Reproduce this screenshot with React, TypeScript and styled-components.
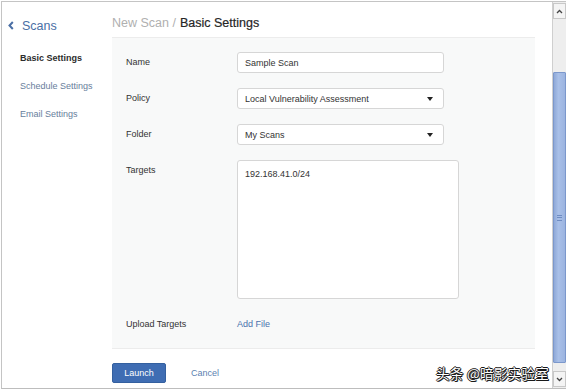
import styled, { createGlobalStyle } from "styled-components";

const GlobalStyle = createGlobalStyle`
  html, body {
    margin: 0;
    padding: 0;
    background: #ffffff;
    font-family: "Liberation Sans", Arial, sans-serif;
  }
`;

const Frame = styled.div`
  margin: 1px 0 0 1px;
  width: 565px;
  height: 388px;
  box-sizing: border-box;
  border-top: 1px solid #c4c4c4;
  border-left: 1px solid #c4c4c4;
  border-bottom: 1px solid #bdbdbd;
  display: flex;
  position: relative;
  overflow: hidden;
`;

const Content = styled.div`
  flex: 1;
  display: flex;
  background: #ffffff;
`;

const Sidebar = styled.nav`
  width: 110px;
  flex-shrink: 0;
  display: flex;
  flex-direction: column;
  padding-top: 6px;
`;

const BackLink = styled.div`
  height: 35px;
  display: flex;
  align-items: center;
  gap: 8px;
  padding-left: 6px;
  color: #4a6fa5;
  font-size: 12.5px;
`;

const NavList = styled.div`
  display: flex;
  flex-direction: column;
  padding-top: 1px;
`;

const NavItem = styled.div<{ $active?: boolean }>`
  height: 28px;
  line-height: 28px;
  padding-left: 18px;
  font-size: 9px;
  font-weight: ${(p) => (p.$active ? 700 : 400)};
  color: ${(p) => (p.$active ? "#2d2d2d" : "#677e9c")};
`;

const Main = styled.main`
  flex: 1;
  display: flex;
  flex-direction: column;
  padding: 6px 17px 0 0;
`;

const Title = styled.h1`
  margin: 0;
  height: 29px;
  display: flex;
  align-items: center;
  font-size: 12.5px;
  font-weight: 400;
  color: #262626;
  -webkit-text-stroke: 0.2px #262626;
`;

const Crumb = styled.span`
  color: #b0b0b0;
  margin-right: 4px;
  -webkit-text-stroke: 0;
`;

const Panel = styled.section`
  background: #f8f9f9;
  border-top: 1px solid #ececec;
  border-bottom: 1px solid #ececec;
  padding: 14px 0 13px 14px;
  display: flex;
  flex-direction: column;
  gap: 15px;
`;

const Row = styled.div`
  display: grid;
  grid-template-columns: 111px 1fr;
  align-items: start;
`;

const Label = styled.label`
  font-size: 9px;
  line-height: 21px;
  color: #333;
`;

const Field = styled.div<{ $width: number; $height?: number }>`
  width: ${(p) => p.$width}px;
  height: ${(p) => p.$height ?? 21}px;
  box-sizing: border-box;
  background: #fff;
  border: 1px solid #d6d6d6;
  border-radius: 3px;
  display: flex;
  align-items: center;
  justify-content: space-between;
  padding: 0 10px 0 7px;
  font-size: 9px;
  color: #333;
`;

const Area = styled(Field)`
  align-items: flex-start;
  padding-top: 8px;
`;

const Caret = styled.span`
  width: 0;
  height: 0;
  border-left: 3.5px solid transparent;
  border-right: 3.5px solid transparent;
  border-top: 4px solid #222;
`;

const Link = styled.span`
  font-size: 9px;
  line-height: 21px;
  color: #4a72ad;
`;

const Footer = styled.div`
  display: flex;
  align-items: center;
  gap: 25px;
  padding-top: 14px;
`;

const Button = styled.button`
  width: 54px;
  height: 20px;
  border: 1px solid #34609f;
  border-radius: 2px;
  background: #3f6db3;
  color: #fff;
  font-family: inherit;
  font-size: 9px;
  padding: 0;
`;

const CancelLink = styled.span`
  font-size: 9px;
  color: #5c7fb1;
`;

const Scrollbar = styled.div`
  width: 13px;
  flex-shrink: 0;
  background: #eeeeee;
  border-left: 1px solid #cfcfcf;
  display: flex;
  flex-direction: column;
  padding: 1px 0 1px;
`;

const ScrollButton = styled.div`
  height: 14px;
  background: #f4f4f4;
  border: 1px solid #c8c8c8;
  display: flex;
  align-items: center;
  justify-content: center;
`;

const Track = styled.div<{ $grow?: boolean; $size?: number }>`
  flex: ${(p) => (p.$grow ? 1 : `0 0 ${p.$size}px`)};
`;

const Thumb = styled.div`
  flex: 0 0 289px;
  background: linear-gradient(90deg, #8fa9d8, #a9c0e8 40%, #9cb4e0);
  border: 1px solid #7c98cc;
  border-radius: 1px;
  display: flex;
  align-items: center;
  justify-content: center;
`;

const Grip = styled.div`
  width: 5px;
  height: 6px;
  border-top: 1px solid #6f8cc2;
  border-bottom: 1px solid #6f8cc2;
  box-sizing: border-box;
  position: relative;
  &::after {
    content: "";
    position: absolute;
    left: 0;
    right: 0;
    top: 1.5px;
    border-top: 1px solid #6f8cc2;
  }
`;

const Watermark = styled.div`
  position: absolute;
  right: 17px;
  bottom: 5px;
  font-family: "Noto Sans CJK SC", sans-serif;
  font-size: 13.5px;
  color: #ffffff;
  text-shadow: 1px 1px 0 #1a1a1a, -1px 0 0 #1a1a1a, 0 -1px 0 #1a1a1a,
    1px 0 0 #1a1a1a, 0 1px 0 #1a1a1a;
  letter-spacing: 0.3px;
`;

const Chevron = ({ dir }: { dir: "left" | "up" | "down" }) => {
  if (dir === "left") {
    return (
      <svg width="6" height="9" viewBox="0 0 6 9">
        <path d="M4.8 1 L1.5 4.5 L4.8 8" fill="none" stroke="#4a6fa5" strokeWidth="2" />
      </svg>
    );
  }
  return (
    <svg width="7" height="5" viewBox="0 0 7 5">
      <path
        d={dir === "up" ? "M1 4 L3.5 1.5 L6 4" : "M1 1 L3.5 3.5 L6 1"}
        fill="none"
        stroke="#444"
        strokeWidth="1.3"
      />
    </svg>
  );
};

export default function App() {
  return (
    <>
      <GlobalStyle />
      <Frame>
        <Content>
          <Sidebar>
            <BackLink>
              <Chevron dir="left" />
              Scans
            </BackLink>
            <NavList>
              <NavItem $active>Basic Settings</NavItem>
              <NavItem>Schedule Settings</NavItem>
              <NavItem>Email Settings</NavItem>
            </NavList>
          </Sidebar>
          <Main>
            <Title>
              <Crumb>New Scan /</Crumb>Basic Settings
            </Title>
            <Panel>
              <Row>
                <Label>Name</Label>
                <Field $width={207}>Sample Scan</Field>
              </Row>
              <Row>
                <Label>Policy</Label>
                <Field $width={207}>
                  Local Vulnerability Assessment
                  <Caret />
                </Field>
              </Row>
              <Row>
                <Label>Folder</Label>
                <Field $width={207}>
                  My Scans
                  <Caret />
                </Field>
              </Row>
              <Row>
                <Label>Targets</Label>
                <Area $width={222} $height={139}>
                  192.168.41.0/24
                </Area>
              </Row>
              <Row>
                <Label>Upload Targets</Label>
                <Link>Add File</Link>
              </Row>
            </Panel>
            <Footer>
              <Button>Launch</Button>
              <CancelLink>Cancel</CancelLink>
            </Footer>
          </Main>
        </Content>
        <Scrollbar>
          <ScrollButton>
            <Chevron dir="up" />
          </ScrollButton>
          <Track $size={53} />
          <Thumb>
            <Grip />
          </Thumb>
          <Track $grow />
          <ScrollButton>
            <Chevron dir="down" />
          </ScrollButton>
        </Scrollbar>
        <Watermark>头条 @暗影实验室</Watermark>
      </Frame>
    </>
  );
}
